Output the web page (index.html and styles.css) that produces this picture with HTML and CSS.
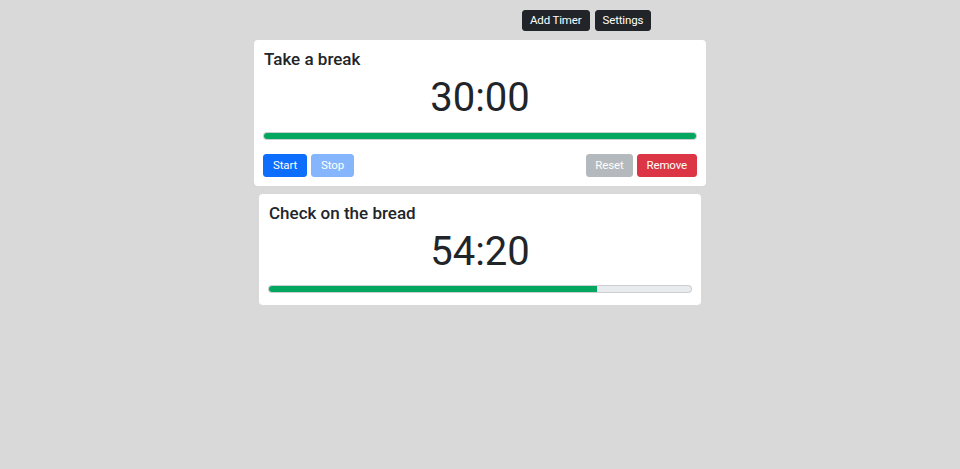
FILE: index.html
```html
<!DOCTYPE html>
<html>
<head>
<meta charset="utf-8">
<link rel="stylesheet" href="styles.css">
</head>
<body>
  <div class="toolbar">
    <button class="btn btn-dark">Add Timer</button>
    <button class="btn btn-dark">Settings</button>
  </div>
  <div class="timers">
    <section class="card card-wide">
      <h2 class="card-title">Take a break</h2>
      <div class="time">30:00</div>
      <div class="progress"><div class="progress-fill" style="width:100%"></div></div>
      <div class="actions">
        <div class="group">
          <button class="btn btn-primary">Start</button>
          <button class="btn btn-primary disabled">Stop</button>
        </div>
        <div class="group">
          <button class="btn btn-secondary disabled">Reset</button>
          <button class="btn btn-danger">Remove</button>
        </div>
      </div>
    </section>
    <section class="card card-narrow">
      <h2 class="card-title">Check on the bread</h2>
      <div class="time">54:20</div>
      <div class="progress"><div class="progress-fill" style="width:77.8%"></div></div>
    </section>
  </div>
</body>
</html>
```
FILE: styles.css
```css
* { box-sizing: border-box; }
html, body {
  margin: 0;
  padding: 0;
  background: #d9d9d9;
  font-family: Roboto, "Liberation Sans", sans-serif;
  color: #212529;
}
.toolbar {
  display: flex;
  gap: 5px;
  padding: 10px 0 0 522px;
  height: 40px;
}
.btn {
  font-family: inherit;
  font-size: 11.5px;
  letter-spacing: -0.15px;
  line-height: 15px;
  border: 1px solid transparent;
  border-radius: 3px;
  padding: 2px 7px;
  height: 21px;
  cursor: pointer;
  color: #fff;
}
.btn-dark { background: #212529; border-color: #212529; }
.actions .btn { height: 23px; padding: 3px 9px; }
.actions .btn-secondary { padding: 3px 8px; }
.btn-primary { background: #0d6efd; border-color: #0d6efd; }
.btn-secondary { background: #6c757d; border-color: #6c757d; }
.btn-danger { background: #dc3545; border-color: #dc3545; }
.btn.disabled { opacity: 0.5; }
.timers {
  display: flex;
  flex-direction: column;
  align-items: center;
  gap: 8px;
}
.card {
  background: #fff;
  border-radius: 4px;
  padding: 9px;
}
.card-wide { width: 452px; }
.card-narrow { width: 442px; padding-bottom: 12px; }
.card-title {
  margin: 0 0 0 1px;
  font-size: 17px;
  line-height: 20px;
  font-weight: 500;
}
.time {
  text-align: center;
  font-size: 40px;
  line-height: 48px;
  font-weight: 400;
  margin-top: 5px;
}
.progress {
  margin-top: 10px;
  height: 8px;
  border-radius: 4px;
  background: #e9ecef;
  border: 1px solid rgba(0,0,0,0.12);
  overflow: hidden;
}
.card-narrow .progress { margin-top: 9px; }
.progress-fill {
  height: 100%;
  background: #04a75f;
}
.actions {
  display: flex;
  justify-content: space-between;
  margin-top: 14px;
}
.group { display: flex; gap: 4px; }
```
